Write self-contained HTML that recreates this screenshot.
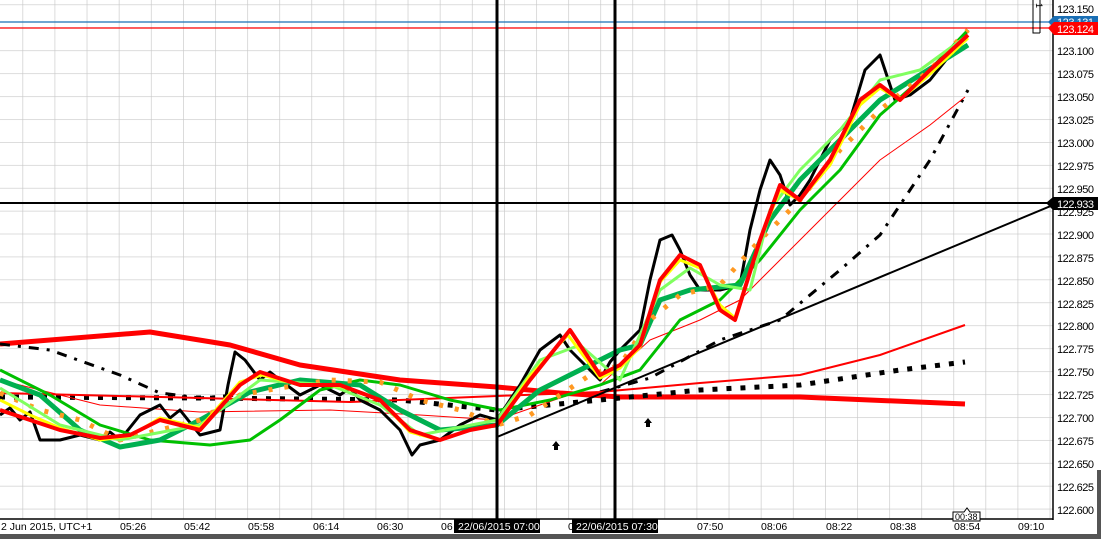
<!DOCTYPE html>
<html><head><meta charset="utf-8"><style>
html,body{margin:0;padding:0;background:#fff;}
body{width:1101px;height:539px;overflow:hidden;position:relative;font-family:"Liberation Sans",sans-serif;}
svg{position:absolute;left:0;top:0}
</style></head><body>
<svg width="1101" height="539" viewBox="0 0 1101 539" xmlns="http://www.w3.org/2000/svg">
<defs>
<pattern id="g" x="22.5" y="4.5" width="32.1" height="22.92" patternUnits="userSpaceOnUse">
<path d="M0 0V22.92M0 0H32.1" stroke="#c8c8c8" stroke-width="1.3" fill="none"/>
</pattern>
<clipPath id="c"><rect x="0" y="0" width="1053" height="519"/></clipPath>
</defs>
<rect x="0" y="0" width="1053" height="519" fill="url(#g)"/>
<g clip-path="url(#c)" fill="none" stroke-linejoin="round" stroke-linecap="butt">
<polyline stroke="#ff0000" stroke-width="5" points="0,344 150,332 230,345 300,365 400,380 497,387 560,393 620,397 800,397 965,404"/>
<polyline stroke="#000" stroke-width="3" stroke-dasharray="10,8,3,8" points="0,344 50,350 120,375 160,393 200,398 250,394"/>
<polyline stroke="#000" stroke-width="3" stroke-dasharray="10,8,3,8" points="600,392 650,378 720,340 780,320 840,270 880,235 930,160 968,90"/>
<polyline stroke="#000" stroke-width="5" stroke-dasharray="5,9" points="0,397 200,398 400,400 497,410 600,400 700,390 800,385 900,370 965,362"/>
<polyline stroke="#ff0000" stroke-width="2" points="0,393 200,398 350,402 497,396 600,392 700,383 800,375 880,355 965,325"/>
<polyline stroke="#ff0000" stroke-width="1" points="0,380 100,405 200,412 330,410 420,415 497,420 560,398 600,385 650,340 700,320 740,300 790,250 830,210 880,160 930,125 965,97"/>
<line x1="497" y1="437" x2="1053" y2="205" stroke="#000" stroke-width="2"/>
<polyline stroke="#000" stroke-width="3" points="0,415 10,408 20,420 30,412 40,440 60,440 80,435 100,440 110,432 120,440 140,415 150,410 160,405 170,418 180,410 200,435 220,430 228,385 235,352 245,360 260,380 270,372 280,380 300,395 320,385 340,395 350,388 360,400 380,410 400,430 412,455 420,445 440,440 460,425 480,415 497,420 510,400 520,385 540,350 560,335 570,350 580,360 600,380 610,362 620,350 640,330 650,280 660,240 672,235 680,250 690,275 700,290 720,290 740,285 750,230 760,190 770,160 780,175 790,205 800,195 810,180 830,140 850,120 865,70 880,55 895,100 910,95 930,80 950,55 968,30"/>
<polyline stroke="#00c000" stroke-width="3" points="0,370 50,395 100,425 150,440 210,445 250,440 280,420 320,390 360,380 400,385 450,400 500,410 550,400 600,385 640,370 680,320 720,300 760,260 800,210 840,170 880,115 920,80 968,30"/>
<polyline stroke="#00b050" stroke-width="5" points="0,380 40,395 80,430 120,447 160,440 200,420 250,392 300,380 360,385 400,410 440,430 497,425 540,390 580,370 620,350 640,345 660,300 690,290 740,285 770,220 800,180 840,140 880,100 968,45"/>
<polyline stroke="#ff9922" stroke-width="5" stroke-dasharray="4,12" points="0,393 40,410 80,420 120,440 160,430 200,420 240,395 280,388 330,380 380,382 420,400 460,410 497,425 530,415 560,395 590,375 620,365 650,320 680,295 720,285 760,240 800,200 840,150 880,110 930,70 968,30"/>
<polyline stroke="#80ff60" stroke-width="3" points="0,388 60,425 120,440 200,425 260,380 330,385 380,405 420,435 497,420 540,360 580,345 620,380 660,290 690,268 720,285 750,290 770,210 800,170 840,130 880,80 920,70 968,35"/>
<polyline stroke="#ffff00" stroke-width="3" points="0,400 30,415 60,428 100,440 130,436 160,418 200,428 240,382 262,375 300,385 340,386 380,400 410,432 440,440 470,430 497,425 530,376 568,335 600,378 620,368 640,347 660,282 680,260 700,268 720,305 735,318 760,240 780,190 800,200 830,165 860,105 880,88 900,100 930,74 968,38"/>
<polyline stroke="#ff0000" stroke-width="4" points="0,410 30,420 60,430 100,438 130,435 160,420 200,430 240,385 260,372 300,385 340,385 380,400 410,430 440,440 470,430 497,425 530,380 570,330 600,375 620,365 640,345 660,280 680,255 700,265 720,310 735,320 760,240 780,185 800,200 830,160 860,100 880,85 900,100 930,70 968,35"/>
</g>
<line x1="0" y1="22" x2="1053" y2="22" stroke="#1a6fb5" stroke-width="1.3"/>
<line x1="0" y1="28" x2="1053" y2="28" stroke="#ff0000" stroke-width="1.3"/>
<line x1="0" y1="203" x2="1053" y2="203" stroke="#000" stroke-width="2"/>
<line x1="497" y1="0" x2="497" y2="519" stroke="#000" stroke-width="3"/>
<line x1="615" y1="0" x2="615" y2="519" stroke="#000" stroke-width="3"/>
<path d="M556 441 L560 446 L558 446 L558 450 L554 450 L554 446 L552 446 Z" fill="#000"/>
<path d="M648 418 L652 423 L650 423 L650 427 L646 427 L646 423 L644 423 Z" fill="#000"/>
<line x1="1053" y1="0" x2="1053" y2="520" stroke="#000" stroke-width="1.5"/>
<line x1="0" y1="519" x2="1053" y2="519" stroke="#000" stroke-width="1.5"/>
<path d="M1033 0 V33 H1040 M1040 0 V33" stroke="#000" stroke-width="1" fill="none"/>
<text x="1036" y="3" font-size="9" transform="rotate(90 1036 3)" fill="#000">1</text>
<g font-size="11" fill="#000" lengthAdjust="spacingAndGlyphs">
<text x="1057" y="13" textLength="37">123.150</text>
<text x="1057" y="55" textLength="37">123.100</text>
<text x="1057" y="78" textLength="37">123.075</text>
<text x="1057" y="101" textLength="37">123.050</text>
<text x="1057" y="124" textLength="37">123.025</text>
<text x="1057" y="147" textLength="37">123.000</text>
<text x="1057" y="170" textLength="37">122.975</text>
<text x="1057" y="193" textLength="37">122.950</text>
<text x="1057" y="216" textLength="37">122.925</text>
<text x="1057" y="239" textLength="37">122.900</text>
<text x="1057" y="262" textLength="37">122.875</text>
<text x="1057" y="285" textLength="37">122.850</text>
<text x="1057" y="308" textLength="37">122.825</text>
<text x="1057" y="330" textLength="37">122.800</text>
<text x="1057" y="353" textLength="37">122.775</text>
<text x="1057" y="376" textLength="37">122.750</text>
<text x="1057" y="399" textLength="37">122.725</text>
<text x="1057" y="422" textLength="37">122.700</text>
<text x="1057" y="445" textLength="37">122.675</text>
<text x="1057" y="468" textLength="37">122.650</text>
<text x="1057" y="491" textLength="37">122.625</text>
<text x="1057" y="514" textLength="37">122.600</text>
</g>
<path d="M1048 22 L1054 16 H1098 V28 H1054 Z" fill="#1a6fb5"/>
<text x="1057" y="26" font-size="11" fill="#fff" textLength="37">123.131</text>
<path d="M1048 28 L1054 22 H1098 V35 H1054 Z" fill="#ff0000"/>
<text x="1057" y="33" font-size="11" fill="#fff" textLength="37">123.124</text>
<path d="M1046 203 L1053 197 H1098 V210 H1053 Z" fill="#000"/>
<text x="1057" y="208" font-size="11" fill="#fff" textLength="37">122.933</text>
<g font-size="10.5" fill="#000">
<text x="1" y="530">2 Jun 2015, UTC+1</text>
<text x="120" y="530">05:26</text>
<text x="184" y="530">05:42</text>
<text x="248" y="530">05:58</text>
<text x="313" y="530">06:14</text>
<text x="377" y="530">06:30</text>
<text x="441" y="530">06</text>
<text x="568" y="530">0</text>
<text x="697" y="530">07:50</text>
<text x="761" y="530">08:06</text>
<text x="826" y="530">08:22</text>
<text x="890" y="530">08:38</text>
<text x="954" y="530">08:54</text>
<text x="1018" y="530">09:10</text>
</g>
<rect x="454" y="519" width="86" height="14" fill="#000"/>
<text x="458" y="530" font-size="10.5" fill="#fff">22/06/2015 07:00</text>
<rect x="572" y="519" width="86" height="14" fill="#000"/>
<text x="576" y="530" font-size="10.5" fill="#fff">22/06/2015 07:30</text>
<path d="M953 512 H964 L967 508 L970 512 H980 V521 H953 Z" fill="#fff" stroke="#000" stroke-width="1"/>
<text x="955" y="520" font-size="9" fill="#000">00:38</text>
<rect x="0" y="534" width="1101" height="5" fill="#555"/>
<rect x="1097" y="470" width="4" height="69" fill="#555"/>
</svg>
</body></html>
